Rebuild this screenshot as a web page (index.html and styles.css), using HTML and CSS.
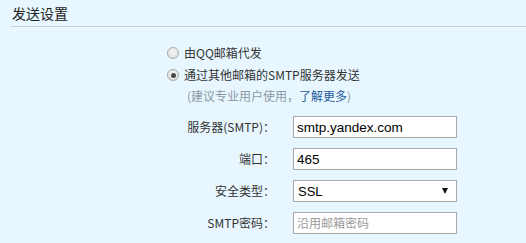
FILE: index.html
```html
<!DOCTYPE html>
<html lang="zh-CN">
<head>
<meta charset="utf-8">
<title>发送设置</title>
<link rel="stylesheet" href="styles.css">
</head>
<body>
<div class="panel">
  <div class="title">发送设置</div>
  <div class="options">
    <label class="opt"><input type="radio" name="mode" class="radio"><span>由QQ邮箱代发</span></label>
    <label class="opt"><input type="radio" name="mode" class="radio" checked><span>通过其他邮箱的SMTP服务器发送</span></label>
    <div class="hint">(建议专业用户使用，<a href="#" class="more">了解更多</a>)</div>
  </div>
  <div class="form">
    <label class="lbl">服务器(SMTP)：</label>
    <input class="field" type="text" value="smtp.yandex.com">
    <label class="lbl">端口：</label>
    <input class="field" type="text" value="465">
    <label class="lbl">安全类型：</label>
    <div class="select-wrap">
      <select class="field select"><option>SSL</option><option>TLS</option></select>
      <span class="arrow"></span>
    </div>
    <label class="lbl">SMTP密码：</label>
    <input class="field" type="password" placeholder="沿用邮箱密码">
  </div>
</div>
</body>
</html>
```
FILE: styles.css
```css
html, body {
  margin: 0;
  padding: 0;
  background: #e8f7ff;
}
body {
  font-family: "Noto Sans CJK SC", "Noto Sans", sans-serif;
  color: #333;
  font-size: 12px;
}
.panel {
  padding-left: 11px;
}
.title {
  font-size: 14px;
  color: #222;
  height: 26px;
  line-height: 26px;
  padding-left: 1px;
  border-bottom: 1px solid #c4cfda;
}
.options {
  margin-left: 156px;
  padding-top: 15px;
  display: flex;
  flex-direction: column;
}
.opt {
  display: flex;
  align-items: center;
  height: 22px;
  gap: 5px;
  line-height: 22px;
}
.radio {
  appearance: none;
  -webkit-appearance: none;
  margin: 0;
  width: 12px;
  height: 12px;
  border-radius: 50%;
  border: 1px solid #a8a8a8;
  background: radial-gradient(circle at 50% 40%, #f4f4f4 0%, #dcdcdc 100%);
  box-sizing: border-box;
  position: relative;
}
.radio:checked::after {
  content: "";
  position: absolute;
  left: 2.5px;
  top: 2.5px;
  width: 5px;
  height: 5px;
  border-radius: 50%;
  background: #4a4a4a;
}
.hint {
  margin-left: 20px;
  margin-top: 1px;
  line-height: 18px;
  color: #8a98a6;
}
.more {
  color: #1f5a9c;
  text-decoration: none;
}
.form {
  display: grid;
  grid-template-columns: 100px 164px;
  column-gap: 18px;
  row-gap: 10px;
  margin-left: 164px;
  margin-top: 11px;
  align-items: center;
}
.lbl {
  text-align: right;
  color: #333;
  line-height: 22px;
}
.field {
  box-sizing: border-box;
  width: 164px;
  height: 22px;
  margin: 0;
  border: 1px solid #a9a9a9;
  background: #fff;
  padding: 0 3px;
  font-family: "Liberation Sans", Arial, sans-serif;
  font-size: 13.5px;
  color: #000;
  outline: none;
}
.field::placeholder {
  font-family: "Noto Sans CJK SC", sans-serif;
  font-size: 12px;
  color: #9a9a9a;
}
.select-wrap {
  position: relative;
  width: 164px;
  height: 22px;
}
.select {
  appearance: none;
  -webkit-appearance: none;
  padding-left: 4px;
  font-size: 13px;
  border-radius: 0;
}
.arrow {
  position: absolute;
  right: 9px;
  top: 8px;
  width: 0;
  height: 0;
  border-left: 3.5px solid transparent;
  border-right: 3.5px solid transparent;
  border-top: 6px solid #111;
  pointer-events: none;
}
```
